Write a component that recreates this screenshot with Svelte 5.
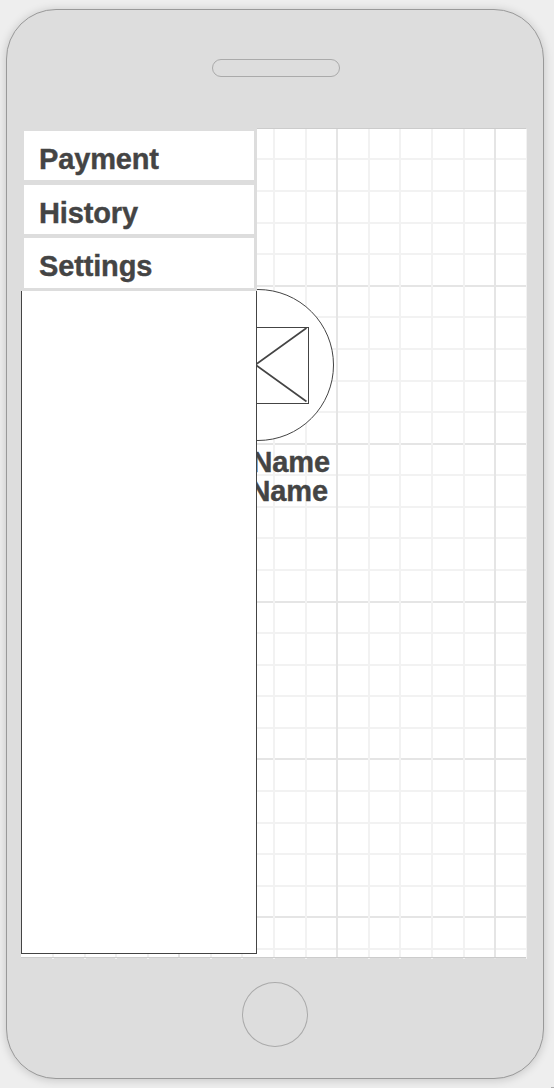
<script>
  const items = ['Payment', 'History', 'Settings'];
  const step = 31.58;
  const columns = Array.from({ length: 15 }, (_, i) => i + 1);
  const rows = Array.from({ length: 26 }, (_, i) => i + 1);
</script>

<main>
  <div class="phone">
    <div class="speaker"></div>
    <section class="screen">
      <svg class="grid" width="506" height="831" aria-hidden="true">
        {#each rows as n}
          <rect class:major={n % 5 === 0} x="0" y={Math.round(n * step - 1.1)} width="505" height="2" />
        {/each}
        {#each columns as n}
          <rect class:major={n % 5 === 0} x={Math.round(n * step - 0.6)} y="1" width="2" height="830" />
        {/each}
        <rect x="505" y="1" width="1" height="830" />
        <path class="edge" d="M0 .5H505M0 829.5H505" />
      </svg>
      <div class="profile">
        <svg width="152" height="152" viewBox="0 0 152 152" aria-hidden="true">
          <circle cx="76" cy="76" r="75.5" />
          <rect x="22.5" y="38.5" width="104" height="76" />
          <path d="M24.5 113L74.5 76.5M74.5 75L124.5 39M24.5 39L74.5 75M74.5 76.5L124.5 112.5" />
        </svg>
        <p>Name</p>
        <p class="last">Name</p>
      </div>
      <aside class="drawer">
        <nav>
          {#each items as item}
            <button>{item}</button>
          {/each}
        </nav>
        <div class="panel"></div>
      </aside>
    </section>
    <div class="home"></div>
  </div>
  <i class="handle"></i>
</main>

<style>
  :global(body) { background: #eee; overflow: hidden; }
  main {
    position: relative;
    box-sizing: border-box;
    width: 554px;
    height: 1088px;
    padding: 9px 10px 9px 6px;
    overflow: hidden;
    font-family: "Liberation Sans", Arial, sans-serif;
    color: #444;
  }
  .phone {
    box-sizing: border-box;
    width: 538px;
    height: 1070px;
    padding: 49px 14px 0;
    border: 1px solid #999;
    border-radius: 50px;
    background: #ddd;
    box-shadow: 0 1px 10px rgba(0, 0, 0, .18);
    display: flex;
    flex-direction: column;
  }
  .speaker {
    box-sizing: border-box;
    width: 128px;
    height: 18px;
    margin-left: 191px;
    border: 1px solid #aaa;
    border-radius: 9px;
  }
  .screen {
    position: relative;
    width: 506px;
    height: 830px;
    margin-top: 51px;
    flex: none;
    background: linear-gradient(#fff, #fff) 0 0 / 505px 830px no-repeat;
  }
  .grid { position: absolute; left: 0; top: 0; fill: #f2f2f2; }
  .grid .major { fill: #e5e5e5; }
  .edge { stroke: #ccc; fill: none; }
  .profile {
    position: absolute;
    left: 161px;
    top: 161px;
    width: 152px;
    font-size: 29px;
    font-weight: bold;
    line-height: 29px;
    letter-spacing: -.1px;
    -webkit-text-stroke: .4px #444;
  }
  .profile svg {
    display: block;
    fill: none;
    stroke: #444;
    margin-bottom: 7px;
  }
  .profile circle { fill: #fff; }
  .profile path { stroke-width: 1.6; }
  .profile p { margin: 0 4px 0 0; text-align: right; }
  .profile .last { margin-right: 6px; }
  .drawer {
    position: absolute;
    left: 0;
    top: 0;
    width: 236px;
    height: 826px;
    display: flex;
    flex-direction: column;
  }
  nav {
    box-sizing: border-box;
    height: 163px;
    padding: 3px;
    display: grid;
    grid-template-rows: 49px 49px 50px;
    row-gap: 4.5px;
    background: #ddd;
  }
  button {
    border: 0;
    padding: 7px 15px 0;
    background: #fff;
    color: inherit;
    font: bold 29px/42px "Liberation Sans", Arial, sans-serif;
    letter-spacing: -.15px;
    -webkit-text-stroke: .4px #444;
    text-align: left;
  }
  button:last-child { padding: 6px 15px 0; }
  .panel {
    flex: 1;
    border: solid #444;
    border-width: 0 1px 1px;
    background: #fff;
  }
  .home {
    box-sizing: border-box;
    width: 66px;
    height: 65px;
    margin: 24px 0 0 221px;
    border: 1px solid #aaa;
    border-radius: 50%;
  }
  .handle {
    position: absolute;
    right: 0;
    bottom: 0;
    width: 3px;
    height: 1px;
    background: #aaa;
  }
</style>
